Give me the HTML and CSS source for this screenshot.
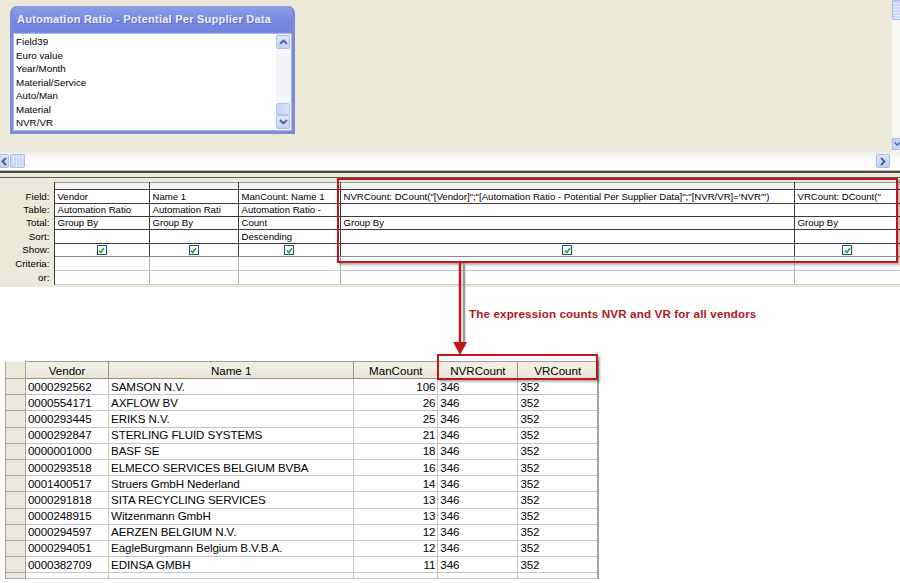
FILE: index.html
```html
<!DOCTYPE html>
<html>
<head>
<meta charset="utf-8">
<link rel="stylesheet" href="styles.css">
</head>
<body>
<div class="design">
  <div class="canvas">
    <div class="fieldlist">
      <div class="fl-title">Automation Ratio - Potential Per Supplier Data</div>
      <div class="fl-body">
        <ul class="fl-items">
          <li>Field39</li>
          <li>Euro value</li>
          <li>Year/Month</li>
          <li>Material/Service</li>
          <li>Auto/Man</li>
          <li>Material</li>
          <li>NVR/VR</li>
        </ul>
        <div class="fl-scroll">
          <div class="sbtn"><svg width="9" height="6" viewBox="0 0 9 6"><path d="M1 5 L4.5 1.5 L8 5" fill="none" stroke="#4d6185" stroke-width="1.8"/></svg></div>
          <div class="fl-track"></div>
          <div class="fl-thumb"></div>
          <div class="sbtn"><svg width="9" height="6" viewBox="0 0 9 6"><path d="M1 1 L4.5 4.5 L8 1" fill="none" stroke="#4d6185" stroke-width="1.8"/></svg></div>
        </div>
      </div>
    </div>
  </div>
  <div class="vscroll">
    <div class="vthumb"></div>
    <div class="vtrack"></div>
    <div class="vdown"><svg width="8" height="6" viewBox="0 0 8 6"><path d="M1 1 L4.5 4.5 L8 1" fill="none" stroke="#4d6185" stroke-width="1.8"/></svg></div>
  </div>
</div>
<div class="hscroll">
  <div class="hbtn left"><svg width="6" height="9" viewBox="0 0 6 9"><path d="M5 1 L1.5 4.5 L5 8" fill="none" stroke="#4d6185" stroke-width="1.8"/></svg></div>
  <div class="hthumb"></div>
  <div class="htrack"></div>
  <div class="hbtn right"><svg width="6" height="9" viewBox="0 0 6 9"><path d="M1 1 L4.5 4.5 L1 8" fill="none" stroke="#4d6185" stroke-width="1.8"/></svg></div>
  <div class="hcorner"></div>
</div>
<div class="splitter"></div>
<div class="gridpane">
  <div class="gridrule"></div>
  <table class="qbe">
    <colgroup><col class="c0"><col class="c1"><col class="c2"><col class="c3"><col class="c4"><col class="c5"></colgroup>
    <tr class="sel"><td class="lbl"></td><td></td><td></td><td></td><td></td><td></td></tr>
    <tr class="r14"><td class="lbl">Field:</td><td>Vendor</td><td>Name 1</td><td>ManCount: Name 1</td><td>NVRCount: DCount("[Vendor]";"[Automation Ratio - Potential Per Supplier Data]";"[NVR/VR]='NVR'")</td><td>VRCount: DCount("</td></tr>
    <tr class="r13"><td class="lbl">Table:</td><td>Automation Ratio</td><td>Automation Rati</td><td>Automation Ratio -</td><td></td><td></td></tr>
    <tr class="r13"><td class="lbl">Total:</td><td>Group By</td><td>Group By</td><td>Count</td><td>Group By</td><td>Group By</td></tr>
    <tr class="r14"><td class="lbl">Sort:</td><td></td><td></td><td>Descending</td><td></td><td></td></tr>
    <tr class="r13 show"><td class="lbl">Show:</td>
      <td><span class="chk"><svg width="7" height="7" viewBox="0 0 7 7"><path d="M1 3.5 L2.8 5.5 L6 1.3" fill="none" stroke="#22a322" stroke-width="1.6"/></svg></span></td>
      <td><span class="chk"><svg width="7" height="7" viewBox="0 0 7 7"><path d="M1 3.5 L2.8 5.5 L6 1.3" fill="none" stroke="#22a322" stroke-width="1.6"/></svg></span></td>
      <td><span class="chk"><svg width="7" height="7" viewBox="0 0 7 7"><path d="M1 3.5 L2.8 5.5 L6 1.3" fill="none" stroke="#22a322" stroke-width="1.6"/></svg></span></td>
      <td><span class="chk"><svg width="7" height="7" viewBox="0 0 7 7"><path d="M1 3.5 L2.8 5.5 L6 1.3" fill="none" stroke="#22a322" stroke-width="1.6"/></svg></span></td>
      <td><span class="chk"><svg width="7" height="7" viewBox="0 0 7 7"><path d="M1 3.5 L2.8 5.5 L6 1.3" fill="none" stroke="#22a322" stroke-width="1.6"/></svg></span></td>
    </tr>
    <tr class="r14 low"><td class="lbl">Criteria:</td><td></td><td></td><td></td><td></td><td></td></tr>
    <tr class="r14 low"><td class="lbl">or:</td><td></td><td></td><td></td><td></td><td></td></tr>
  </table>
</div>
<div class="result">
  <div class="note">The expression counts NVR and VR for all vendors</div>
  <table class="sheet">
    <colgroup><col class="d0"><col class="d1"><col class="d2"><col class="d3"><col class="d4"><col class="d5"></colgroup>
    <tr class="head"><th class="rs"></th><th>Vendor</th><th>Name 1</th><th>ManCount</th><th>NVRCount</th><th>VRCount</th></tr>
    <tr><td class="rs"></td><td>0000292562</td><td>SAMSON N.V.</td><td class="num">106</td><td>346</td><td>352</td></tr>
    <tr><td class="rs"></td><td>0000554171</td><td>AXFLOW BV</td><td class="num">26</td><td>346</td><td>352</td></tr>
    <tr><td class="rs"></td><td>0000293445</td><td>ERIKS N.V.</td><td class="num">25</td><td>346</td><td>352</td></tr>
    <tr><td class="rs"></td><td>0000292847</td><td>STERLING FLUID SYSTEMS</td><td class="num">21</td><td>346</td><td>352</td></tr>
    <tr><td class="rs"></td><td>0000001000</td><td>BASF SE</td><td class="num">18</td><td>346</td><td>352</td></tr>
    <tr><td class="rs"></td><td>0000293518</td><td>ELMECO SERVICES BELGIUM BVBA</td><td class="num">16</td><td>346</td><td>352</td></tr>
    <tr><td class="rs"></td><td>0001400517</td><td>Struers GmbH Nederland</td><td class="num">14</td><td>346</td><td>352</td></tr>
    <tr><td class="rs"></td><td>0000291818</td><td>SITA RECYCLING SERVICES</td><td class="num">13</td><td>346</td><td>352</td></tr>
    <tr><td class="rs"></td><td>0000248915</td><td>Witzenmann GmbH</td><td class="num">13</td><td>346</td><td>352</td></tr>
    <tr><td class="rs"></td><td>0000294597</td><td>AERZEN BELGIUM N.V.</td><td class="num">12</td><td>346</td><td>352</td></tr>
    <tr><td class="rs"></td><td>0000294051</td><td>EagleBurgmann Belgium B.V.B.A.</td><td class="num">12</td><td>346</td><td>352</td></tr>
    <tr><td class="rs"></td><td>0000382709</td><td>EDINSA GMBH</td><td class="num">11</td><td>346</td><td>352</td></tr>
    <tr class="stub"><td class="rs"></td><td></td><td></td><td></td><td></td><td></td></tr>
  </table>
</div>
<div class="redbox box-grid"></div>
<svg class="arrow" width="24" height="96" viewBox="0 0 24 96">
  <line x1="12" y1="0" x2="12" y2="84" stroke="#999" stroke-width="2.5" transform="translate(2,1)"/>
  <line x1="10" y1="0" x2="10" y2="84" stroke="#c0161c" stroke-width="2.5"/>
  <polygon points="3,80 17,80 10,93" fill="#c0161c"/>
</svg>
<div class="redbox box-sheet"></div>
</body>
</html>
```
FILE: styles.css
```css
* { box-sizing: border-box; }
body {
  margin: 0;
  width: 900px;
  height: 583px;
  overflow: hidden;
  background: #fff;
  font-family: "Liberation Sans", Arial, sans-serif;
  position: relative;
}

/* design canvas */
.design { display: flex; height: 152px; background: #ece9d8; }
.canvas { flex: 1; position: relative; }
.fieldlist {
  position: absolute;
  left: 10px;
  top: 6px;
  width: 285px;
  height: 128px;
  background: #7b8ce0;
  border-radius: 7px 7px 0 0;
  display: flex;
  flex-direction: column;
  padding: 0 3px 3px 3px;
}
.fl-title {
  height: 26px;
  line-height: 27px;
  padding-left: 4px;
  color: #eef0fb;
  font-weight: bold;
  font-size: 11px;
  letter-spacing: 0.25px;
  white-space: nowrap;
  background: linear-gradient(#8f9fe8, #7688e0 60%, #7284de);
  border-radius: 6px 6px 0 0;
  text-shadow: 1px 1px 0 rgba(70, 90, 180, 0.5);
}
.fl-body {
  flex: 1;
  display: flex;
  background: #fff;
  border: 1px solid #a9b6ee;
  margin-top: 1px;
}
.fl-items {
  flex: 1;
  list-style: none;
  margin: 0;
  padding: 1px 0 0 2px;
  font-size: 9.8px;
}
.fl-items li { height: 13.5px; line-height: 13.5px; color: #000; }
.fl-scroll {
  width: 15px;
  display: flex;
  flex-direction: column;
  background: #f4f5fb;
  padding: 1px 1px 1px 0;
}
.sbtn {
  height: 14px;
  background: linear-gradient(#dde7fd, #c0d2fa);
  border: 1px solid #aebfef;
  border-radius: 2px;
  display: flex;
  align-items: center;
  justify-content: center;
}
.fl-track { flex: 1; }
.fl-thumb {
  height: 12px;
  background: linear-gradient(90deg, #c6d5fa, #d8e3fd);
  border: 1px solid #b4c4f0;
  border-radius: 2px;
}

.vscroll { width: 8px; display: flex; flex-direction: column; background: #f6f6f2; }
.vthumb {
  height: 20px;
  background: repeating-linear-gradient(#c9d7fa 0 2px, #e3ebfd 2px 3px);
  border: 1px solid #a9bdeb;
  border-right: none;
  border-radius: 2px 0 0 2px;
}
.vtrack { flex: 1; }
.vdown {
  height: 12px;
  margin-bottom: 2px;
  background: #c6d5fb;
  border: 1px solid #a9bdeb;
  border-right: none;
  display: flex;
  align-items: center;
  justify-content: flex-start;
  padding-left: 1px;
  overflow: hidden;
}

/* horizontal scrollbar */
.hscroll {
  height: 18px;
  display: flex;
  align-items: center;
  background: linear-gradient(#efeee8, #fefefe 40%, #fbfbf8);
  padding: 1px 0;
}
.hbtn {
  height: 14px;
  background: linear-gradient(#dbe5fd, #bfd1fa);
  border: 1px solid #a9bdeb;
  border-radius: 2px;
  display: flex;
  align-items: center;
  justify-content: center;
}
.hbtn.left { width: 9px; border-left: none; border-radius: 0 2px 2px 0; }
.hbtn.right { width: 14px; }
.hthumb {
  width: 15px;
  height: 14px;
  margin-left: 1px;
  background: repeating-linear-gradient(90deg, #c9d7fa 0 2px, #e3ebfd 2px 3px);
  border: 1px solid #a9bdeb;
  border-radius: 2px;
}
.htrack { flex: 1; }
.hcorner { width: 10px; }

.splitter { height: 3px; border-top: 1px solid #b8b6aa; background: #4a4a4a; }

/* QBE grid */
.gridpane { height: 114px; background: #ece9d8; padding-top: 4px; overflow: hidden; }
.gridrule { height: 1px; background: #5a5a5a; margin-bottom: 4px; }
.qbe {
  border-collapse: collapse;
  table-layout: fixed;
  width: 900px;
  font-size: 9.6px;
}
.c0 { width: 54px; }
.c1 { width: 95px; }
.c2 { width: 89px; }
.c3 { width: 102px; }
.c4 { width: 454px; }
.c5 { width: 106px; }
.qbe td {
  background: #fff;
  border: 1px solid #3c3c3c;
  padding: 0 0 0 3px;
  white-space: nowrap;
  overflow: hidden;
  line-height: 12px;
  color: #000;
}
.qbe td.lbl {
  background: #ece9d8;
  border: none;
  border-right: 1px solid #3c3c3c;
  text-align: right;
  padding: 0 4px 0 0;
  font-size: 9.8px;
}
.qbe tr.sel td { height: 7px; background: #f3f3f1; border-top: 1px solid #9a9a9a; }
.qbe tr.sel td.lbl { background: #ece9d8; border-top: none; }
.qbe tr.r14 td { height: 14px; }
.qbe tr.r13 td { height: 13px; }
.qbe tr.show td { text-align: center; padding: 0; }
.qbe tr.show td.lbl { text-align: right; padding-right: 4px; }
.qbe tr.low td { border-top-color: #c8c8c8; border-bottom-color: #c8c8c8; border-left-color: #b0b0b0; border-right-color: #b0b0b0; }
.qbe tr.show td { border-bottom-color: #8a8a8a; }
.qbe tr.low td.lbl { border-top: none; border-bottom: none; border-right-color: #3c3c3c; }
.chk {
  display: inline-flex;
  width: 10px;
  height: 10px;
  border: 1px solid #1c5180;
  background: #fff;
  align-items: center;
  justify-content: center;
  vertical-align: middle;
}

/* results */
.result { height: 296px; }
.note {
  margin: 20px 0 0 469px;
  height: 13px;
  line-height: 13px;
  font-size: 11.6px;
  letter-spacing: 0.15px;
  font-weight: bold;
  color: #b5141c;
  white-space: nowrap;
}
.sheet {
  margin: 41px 0 0 5px;
  border-collapse: collapse;
  table-layout: fixed;
  width: 594px;
  font-size: 11.6px;
  border-right: 2px solid #a3a3a3;
  border-left: 1px solid #a0a0a0;
}
.d0 { width: 20px; }
.d1 { width: 83px; }
.d2 { width: 245px; }
.d3 { width: 84px; }
.d4 { width: 80px; }
.d5 { width: 80px; }
.sheet th {
  height: 17px;
  font-weight: normal;
  text-align: center;
  background: linear-gradient(#f3f1e6, #e9e6d6);
  border: 1px solid #8f8f8f;
  border-top-color: #a0a0a0;
  color: #000;
  padding: 0;
}
.sheet td {
  height: 16.2px;
  padding: 0 0 0 2px;
  border: 1px solid #c4c4c4;
  white-space: nowrap;
  overflow: hidden;
  line-height: 14px;
  color: #000;
  letter-spacing: -0.1px;
}
.sheet td.num { text-align: right; padding: 0 2px 0 0; }
.sheet .rs {
  background: #ece9d8;
  border: 1px solid #a6a49a;
  border-top-color: #fff;
  padding: 0;
}
.sheet tr.stub td { height: 6px; }

/* overlays */
.redbox {
  position: absolute;
  border: 2px solid #c0161c;
  box-shadow: 2px 2px 2px rgba(0, 0, 0, 0.3);
}
.box-grid { left: 337px; top: 178px; width: 561px; height: 85px; }
.box-sheet { left: 437px; top: 354px; width: 161px; height: 26px; }
.arrow { position: absolute; left: 450px; top: 262px; }
```
